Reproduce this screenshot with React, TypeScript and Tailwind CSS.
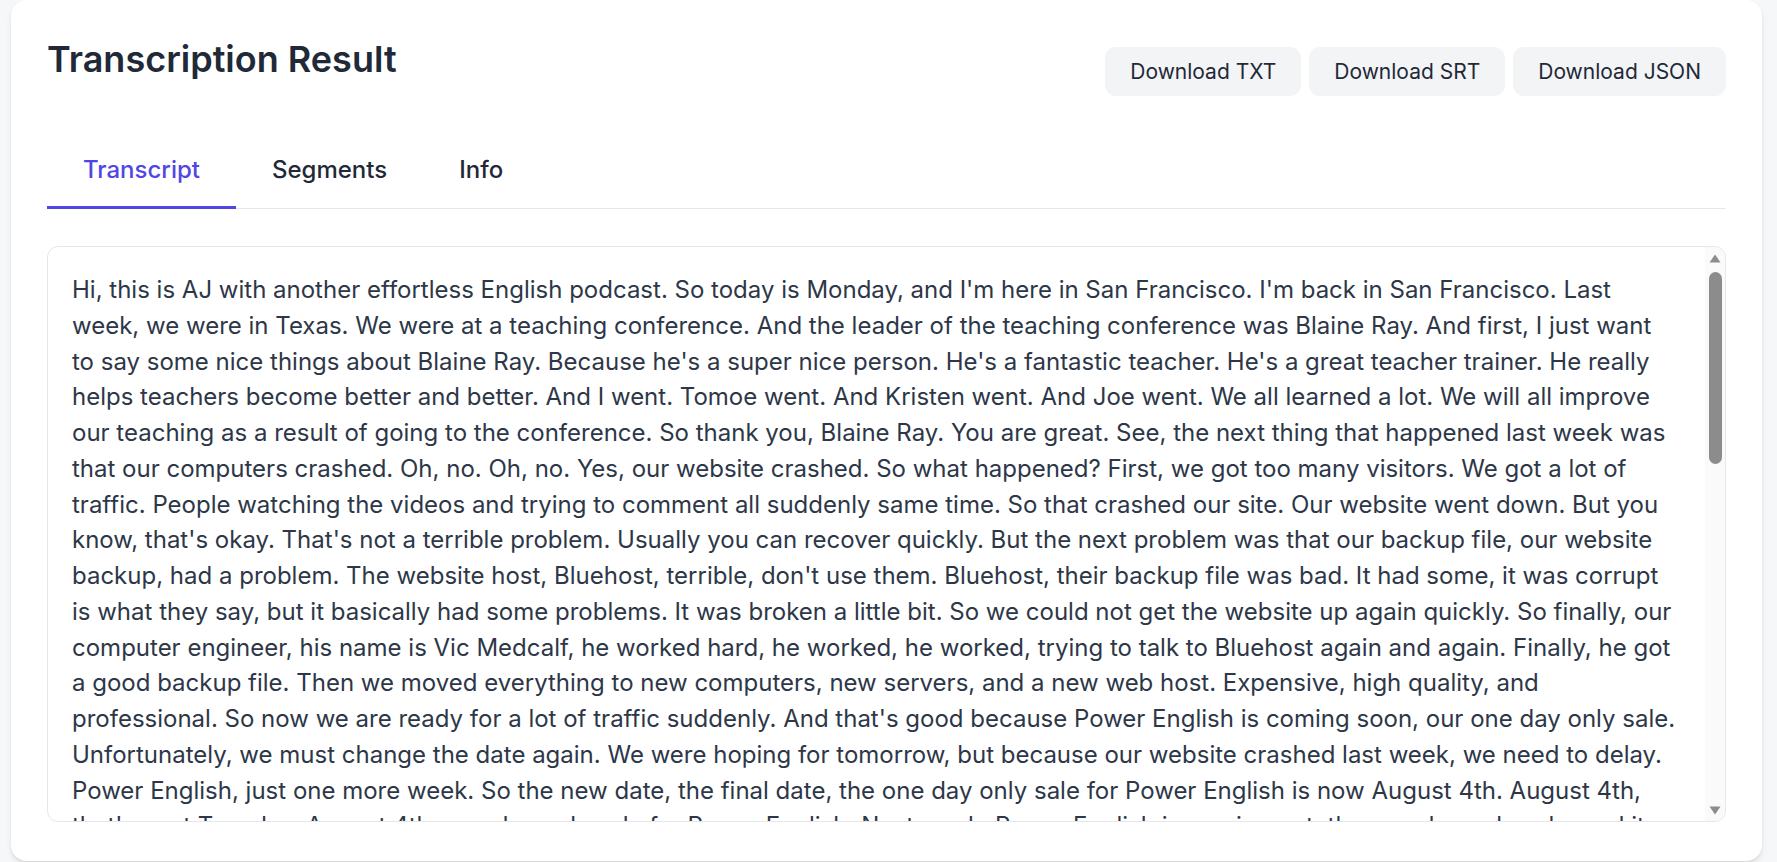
import React, { useState } from "react";

const transcript =
  "Hi, this is AJ with another effortless English podcast. So today is Monday, and I'm here in San Francisco. I'm back in San Francisco. Last week, we were in Texas. We were at a teaching conference. And the leader of the teaching conference was Blaine Ray. And first, I just want to say some nice things about Blaine Ray. Because he's a super nice person. He's a fantastic teacher. He's a great teacher trainer. He really helps teachers become better and better. And I went. Tomoe went. And Kristen went. And Joe went. We all learned a lot. We will all improve our teaching as a result of going to the conference. So thank you, Blaine Ray. You are great. See, the next thing that happened last week was that our computers crashed. Oh, no. Oh, no. Yes, our website crashed. So what happened? First, we got too many visitors. We got a lot of traffic. People watching the videos and trying to comment all suddenly same time. So that crashed our site. Our website went down. But you know, that's okay. That's not a terrible problem. Usually you can recover quickly. But the next problem was that our backup file, our website backup, had a problem. The website host, Bluehost, terrible, don't use them. Bluehost, their backup file was bad. It had some, it was corrupt is what they say, but it basically had some problems. It was broken a little bit. So we could not get the website up again quickly. So finally, our computer engineer, his name is Vic Medcalf, he worked hard, he worked, he worked, trying to talk to Bluehost again and again. Finally, he got a good backup file. Then we moved everything to new computers, new servers, and a new web host. Expensive, high quality, and professional. So now we are ready for a lot of traffic suddenly. And that's good because Power English is coming soon, our one day only sale. Unfortunately, we must change the date again. We were hoping for tomorrow, but because our website crashed last week, we need to delay. Power English, just one more week. So the new date, the final date, the one day only sale for Power English is now August 4th. August 4th, that's next Tuesday, August 4th, one day only sale for Power English. Next week, Power English is coming out, the one day only sale, and it will be available. You can get it at a special price, but only for one day. After that, the price goes up again.";

const tabs = ["Transcript", "Segments", "Info"];
const downloads = ["Download TXT", "Download SRT", "Download JSON"];

export default function App() {
  const [active, setActive] = useState("Transcript");

  return (
    <div className="min-h-[862px] bg-[#f6f7f9] pl-[11px] pr-[15px] pb-[4px] font-['Inter',sans-serif]">
      <div className="rounded-2xl bg-white px-[36px] pt-[39px] pb-[39px] shadow-md">
        {/* Header */}
        <div className="flex items-start justify-between">
          <h1 className="text-[36px] leading-[40px] font-semibold text-[#1f2937]">
            Transcription Result
          </h1>
          <div className="mt-[8px] flex gap-[8px]">
            {downloads.map((label) => (
              <button
                key={label}
                className="rounded-[11px] bg-[#f3f4f6] px-[25px] py-[8px] text-[21px] leading-[33px] text-[#1f2937] hover:bg-gray-200"
              >
                {label}
              </button>
            ))}
          </div>
        </div>

        {/* Tabs */}
        <div className="mt-[37px] flex border-b border-[#e5e7eb]">
          {tabs.map((tab) => (
            <button
              key={tab}
              onClick={() => setActive(tab)}
              className={
                tab === active
                  ? "-mb-px border-b-[3px] border-[#4f46e5] px-[36px] pt-[20px] pb-[20px] text-[24px] leading-[33px] font-medium text-[#4f46e5]"
                  : "-mb-px border-b-[3px] border-transparent px-[36px] pt-[20px] pb-[20px] text-[24px] leading-[33px] font-medium text-[#1f2937]"
              }
            >
              {tab}
            </button>
          ))}
        </div>

        {/* Transcript box */}
        <div className="mt-[37px] flex h-[576px] overflow-hidden rounded-[11px] border border-[#e5e7eb]">
          <div className="flex-1 overflow-hidden pt-[25px] pl-[24px] pr-[28px]">
            <p className="text-[24px] leading-[35.75px] text-[#2d3748]">{transcript}</p>
          </div>
          <div className="flex w-[20px] flex-col items-center bg-[#fafafa]">
            <svg width="12" height="9" viewBox="0 0 12 9" className="mt-[7px]">
              <path d="M6 0.5 L11.5 8.5 L0.5 8.5 Z" fill="#8c8c8c" />
            </svg>
            <div className="mt-[9px] h-[192px] w-[13px] rounded-full bg-[#8c8c8c]" />
            <div className="flex-1" />
            <svg width="12" height="9" viewBox="0 0 12 9" className="mb-[6px]">
              <path d="M0.5 0.5 L11.5 0.5 L6 8.5 Z" fill="#8c8c8c" />
            </svg>
          </div>
        </div>
      </div>
    </div>
  );
}
